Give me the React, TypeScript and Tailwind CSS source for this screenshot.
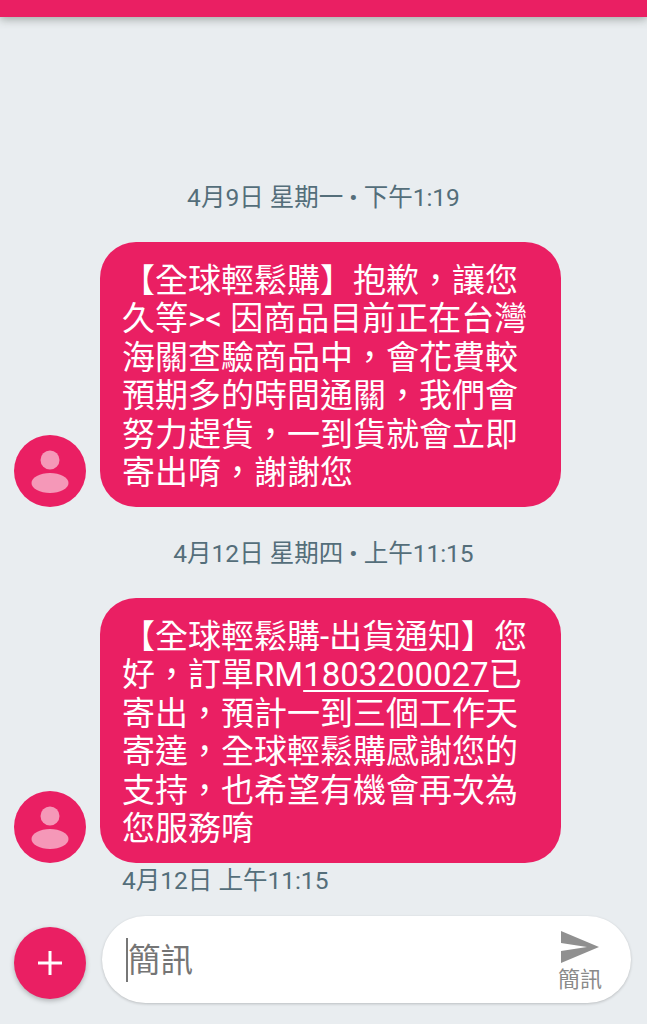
import React from 'react';

const FONT = "font-['Roboto','Noto_Sans_CJK_TC',sans-serif]";

function Avatar() {
  return (
    <div className="w-[72px] h-[72px] rounded-full bg-[#ea1f63] shrink-0 flex items-center justify-center">
      <svg width="72" height="72" viewBox="0 0 72 72">
        <circle cx="36" cy="25" r="9.5" fill="#f598b8" />
        <ellipse cx="36" cy="48" rx="18.5" ry="10" fill="#f598b8" />
      </svg>
    </div>
  );
}

function Message({ lines }: { lines: React.ReactNode[] }) {
  return (
    <div className="flex items-end pl-[14px]">
      <Avatar />
      <div className="ml-[14px] w-[461px] h-[265px] rounded-[36px] bg-[#ea1f63] pl-[22px] pt-[20px] text-white text-[33px] leading-[38.4px] whitespace-nowrap">
        {lines.map((line, i) => (
          <div key={i}>{line}</div>
        ))}
      </div>
    </div>
  );
}

export default function App() {
  return (
    <div className={`${FONT} w-[647px] h-[1024px] overflow-hidden bg-[#e9edf0] flex flex-col`}>
      <div className="h-[17px] bg-[#ea1f63] shadow-[0_2px_10px_rgba(60,70,60,0.45)] shrink-0" />

      <div className="mt-[163px] h-[36px] leading-[36px] text-center text-[24.5px] text-[#546e7a]">
        4月9日 星期一 • 下午1:19
      </div>
      <div className="mt-[26px]">
        <Message
          lines={[
            '【全球輕鬆購】抱歉，讓您',
            '久等>< 因商品目前正在台灣',
            '海關查驗商品中，會花費較',
            '預期多的時間通關，我們會',
            '努力趕貨，一到貨就會立即',
            '寄出唷，謝謝您',
          ]}
        />
      </div>

      <div className="mt-[29px] h-[36px] leading-[36px] text-center text-[24.5px] text-[#546e7a]">
        4月12日 星期四 • 上午11:15
      </div>
      <div className="mt-[26px]">
        <Message
          lines={[
            '【全球輕鬆購-出貨通知】您',
            <>
              好，訂單RM<span className="underline decoration-2 underline-offset-4">1803200027</span>已
            </>,
            '寄出，預計一到三個工作天',
            '寄達，全球輕鬆購感謝您的',
            '支持，也希望有機會再次為',
            '您服務唷',
          ]}
        />
      </div>
      <div className="pl-[122px] h-[36px] leading-[36px] text-[24.5px] text-[#546e7a]">
        4月12日 上午11:15
      </div>

      {/* compose bar */}
      <div className="mt-[17px] flex items-center pl-[14px] pr-[16px]">
        <button className="w-[72px] h-[72px] mt-[7px] rounded-full bg-[#ea1f63] shadow-[0_2px_5px_rgba(0,0,0,0.25)] flex items-center justify-center shrink-0">
          <svg width="26" height="26" viewBox="0 0 26 26">
            <path d="M13 1v24M1 13h24" stroke="#fff" strokeWidth="3" fill="none" />
          </svg>
        </button>
        <div className="ml-[16px] flex-1 h-[87px] rounded-[43.5px] bg-white shadow-[0_1px_3px_rgba(0,0,0,0.2)] flex items-center pl-[24px] pr-[29px]">
          <div className="w-[2px] h-[44px] bg-[#777]" />
          <div className="text-[32.5px] text-[#757575] flex-1 pt-[4px]">簡訊</div>
          <div className="flex flex-col items-center mt-[5px]">
            <svg width="40" height="32" viewBox="0 0 40 32">
              <path d="M1 0L39 16L1 32V20L27 16L1 12Z" fill="#909090" />
            </svg>
            <div className="text-[22px] leading-[28px] text-[#8a8a8a] mt-[3px]">簡訊</div>
          </div>
        </div>
      </div>
    </div>
  );
}
